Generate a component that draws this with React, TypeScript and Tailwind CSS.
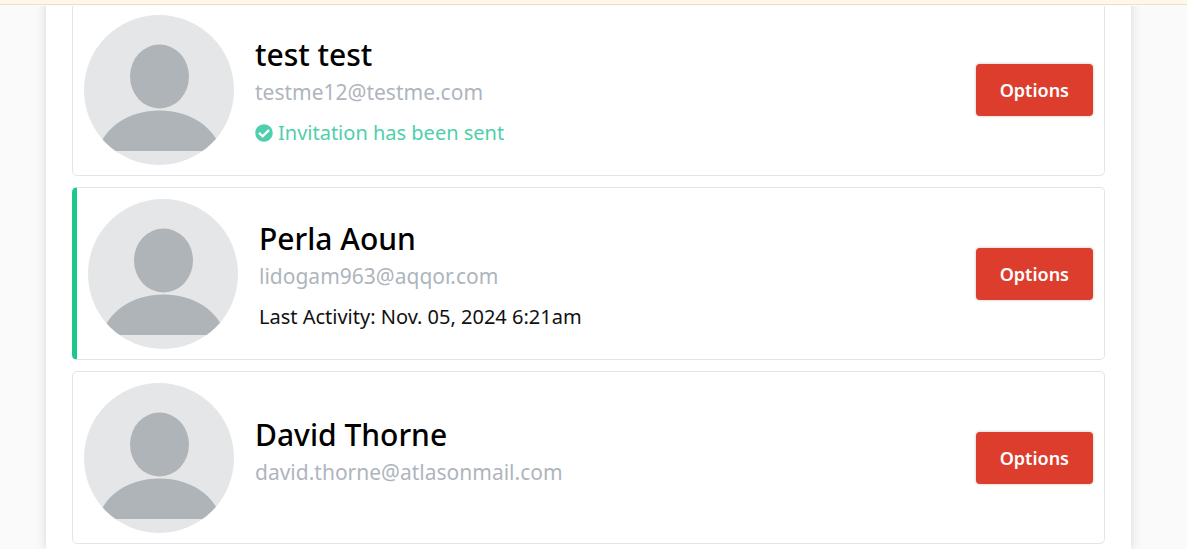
import { FC } from "react";
import { FaCheckCircle } from "react-icons/fa";

interface Member {
  name: string;
  email: string;
  lastActivity?: string;
  invited?: boolean;
  active?: boolean;
}

const members: Member[] = [
  { name: "test test", email: "testme12@testme.com", invited: true },
  {
    name: "Perla Aoun",
    email: "lidogam963@aqqor.com",
    lastActivity: "Nov. 05, 2024 6:21am",
    active: true,
  },
  { name: "David Thorne", email: "david.thorne@atlasonmail.com" },
];

const Avatar: FC = () => (
  <svg
    viewBox="0 0 150 150"
    className="size-[150px] shrink-0 rounded-full bg-[#e4e6e8]"
    aria-hidden="true"
  >
    <ellipse cx="75.5" cy="61.5" rx="29.5" ry="32" fill="#aeb4b8" />
    <path d="M14 136C20 112 45 95.500 75.500 95.500S131 112 137 136Z" fill="#aeb4b8" />
  </svg>
);

const MemberCard: FC<{ member: Member }> = ({ member }) => {
  const { name, email, lastActivity, invited, active } = member;

  return (
    <li
      className={`flex items-center rounded-[5px] border border-[#e2e3ef] px-[11px] pt-[11px] pb-[10px] ${
        active ? "border-l-[5px] border-l-[#1dc98a]" : ""
      }`}
    >
      <Avatar />
      <div className="ml-[21px] min-w-0 flex-1">
        <h2 className="text-[30px] leading-10 font-medium text-black">{name}</h2>
        <p className="mb-3 text-[21px] leading-[34px] text-[#aeb5bd]">{email}</p>
        {invited && (
          <p className="flex items-center gap-[5px] text-xl leading-6 text-[#4fcfab]">
            <FaCheckCircle className="size-[18px]" aria-hidden="true" />
            Invitation has been sent
          </p>
        )}
        {lastActivity && (
          <p className="text-xl leading-6 text-[#111111]">Last Activity: {lastActivity}</p>
        )}
      </div>
      <button
        type="button"
        className="cursor-pointer rounded-[4px] bg-[#dc3d2d] px-6 py-3.5 text-[18px] leading-6 font-semibold text-white shadow-[0_0_3px_rgba(0,0,0,0.25)] hover:bg-[#c53425]"
      >
        Options
      </button>
    </li>
  );
};

const App: FC = () => {
  return (
    <div className="flex min-h-screen flex-col bg-[#fafafa] font-['Noto_Sans',sans-serif]">
      {/* Notice bar stays above the scrolled list */}
      <header className="fixed inset-x-0 top-0 z-10 h-[5px] border-b border-[#ecdfc8] bg-[#fff8ea] shadow-[0_1px_0_#fffcf5]" />

      <main className="mr-14 ml-[46px] flex-1 bg-white px-[26px] pt-[3px] shadow-[0_0_10px_rgba(0,0,0,0.15)]">
        <ul className="flex flex-col gap-[11px]">
          {members.map((member) => (
            <MemberCard key={member.email} member={member} />
          ))}
        </ul>
      </main>
    </div>
  );
};

export default App;
